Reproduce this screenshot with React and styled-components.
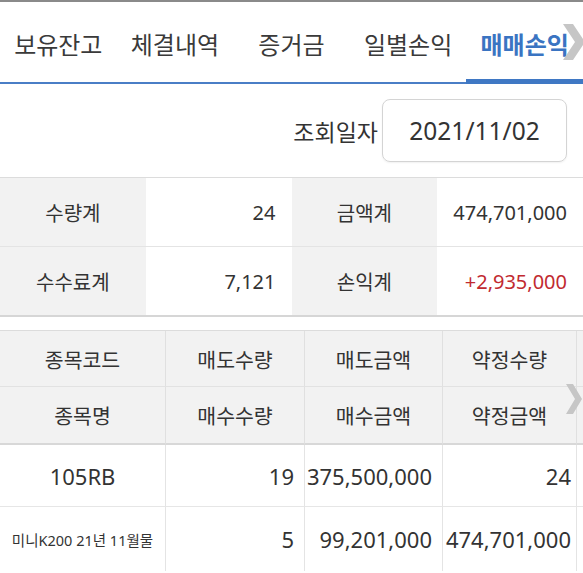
import React from "react";
import styled, { createGlobalStyle } from "styled-components";

const GlobalStyle = createGlobalStyle`
  html, body { margin: 0; padding: 0; background: #fff; }
  body {
    font-family: "Noto Sans", "Noto Sans CJK KR", sans-serif;
    color: #333;
    -webkit-font-smoothing: antialiased;
  }
`;

const Page = styled.div`
  width: 583px;
  height: 573px;
  overflow: hidden;
  position: relative;
  background: #fff;
`;

const TabBar = styled.nav`
  position: relative;
  display: flex;
  height: 80px;
  border-top: 2px solid #8a8a8a;
  border-bottom: 2px solid #4a7ec6;
`;

const Tab = styled.div`
  position: relative;
  flex: 1 1 0;
  display: flex;
  align-items: center;
  justify-content: center;
  font-size: 24px;
  white-space: nowrap;
  color: ${(p) => (p.$active ? "#3a74c2" : "#3a3a3a")};
  font-weight: ${(p) => (p.$active ? 700 : 400)};
  padding-top: 2px;
  box-sizing: border-box;

  &::after {
    content: "";
    display: ${(p) => (p.$active ? "block" : "none")};
    position: absolute;
    left: 0;
    right: 0;
    bottom: -2px;
    height: 5px;
    background: #3f78c4;
  }
`;

const Chevron = styled.svg`
  position: absolute;
  left: ${(p) => p.$left}px;
  top: ${(p) => p.$top}px;
  pointer-events: none;
`;

const DateRow = styled.div`
  height: 93px;
  display: flex;
  align-items: center;
  justify-content: flex-end;
  gap: 4px;
  padding-right: 16px;
`;

const DateLabel = styled.span`
  font-size: 23px;
  color: #333;
`;

const DateBox = styled.div`
  width: 185px;
  height: 63px;
  box-sizing: border-box;
  border: 1px solid #d4d4d4;
  border-radius: 8px;
  display: flex;
  align-items: center;
  justify-content: center;
  font-size: 24.5px;
  color: #333;
  box-shadow: 0 1px 2px rgba(0, 0, 0, 0.06);
`;

const Summary = styled.div`
  display: grid;
  grid-template-columns: repeat(4, 1fr);
  border-top: 1px solid #dcdcdc;
  border-bottom: 2px solid #d6d6d6;
`;

const SumCell = styled.div`
  height: 68px;
  display: flex;
  align-items: center;
  justify-content: ${(p) => (p.$label ? "center" : "flex-end")};
  padding: 0 16px;
  background: ${(p) => (p.$label ? "#f2f2f2" : "#fff")};
  border-bottom: ${(p) => (p.$last ? "none" : "1px solid #e4e4e4")};
  font-size: 20px;
  color: ${(p) => (p.$red ? "#c12a30" : "#333")};
  box-sizing: content-box;
`;

const Detail = styled.div`
  margin-top: 13px;
  display: grid;
  grid-template-columns: 166px 139px 138px 134px 1fr;
  border-top: 1px solid #dcdcdc;
`;

const HeadCell = styled.div`
  height: ${(p) => p.$h}px;
  display: flex;
  align-items: center;
  justify-content: center;
  background: #f2f2f2;
  font-size: 20.5px;
  color: #333;
  border-right: 1px solid #e0e0e0;
  border-bottom: ${(p) => (p.$bottom ? "2px solid #d8d8d8" : "1px solid #e2e2e2")};
  white-space: nowrap;
`;

const DataCell = styled.div`
  height: ${(p) => p.$h}px;
  display: flex;
  align-items: center;
  justify-content: ${(p) => (p.$center ? "center" : "flex-end")};
  padding: 0 ${(p) => (p.$center ? 0 : p.$pr ?? 10)}px;
  font-size: ${(p) => p.$fs ?? 22}px;
  color: #333;
  border-right: 1px solid #e4e4e4;
  border-bottom: ${(p) => (p.$bottom ? "1px solid #e6e6e6" : "none")};
  white-space: nowrap;
  background: #fff;
`;

const Spacer = styled.div`
  background: ${(p) => (p.$head ? "#f2f2f2" : "#fff")};
  border-bottom: ${(p) => p.$border || "none"};
`;

const tabs = ["보유잔고", "체결내역", "증거금", "일별손익", "매매손익"];

const ChevronIcon = ({ left, top, w, h, t }) => (
  <Chevron $left={left} $top={top} width={w} height={h} viewBox={`0 0 ${w} ${h}`}>
    <polygon
      points={`0,0 ${t},0 ${w},${h / 2} ${t},${h} 0,${h} ${w - t},${h / 2}`}
      fill="#c6c6c6"
    />
  </Chevron>
);

export default function App() {
  return (
    <Page>
      <GlobalStyle />
      <TabBar>
        {tabs.map((t, i) => (
          <Tab key={t} $active={i === 4}>
            {t}
          </Tab>
        ))}
      </TabBar>
      <ChevronIcon left={563} top={24} w={22} h={36} t={10} />

      <DateRow>
        <DateLabel>조회일자</DateLabel>
        <DateBox>2021/11/02</DateBox>
      </DateRow>

      <Summary>
        <SumCell $label>수량계</SumCell>
        <SumCell>24</SumCell>
        <SumCell $label>금액계</SumCell>
        <SumCell>474,701,000</SumCell>
        <SumCell $label $last>수수료계</SumCell>
        <SumCell $last>7,121</SumCell>
        <SumCell $label $last>손익계</SumCell>
        <SumCell $last $red>+2,935,000</SumCell>
      </Summary>

      <Detail>
        <HeadCell $h={55}>종목코드</HeadCell>
        <HeadCell $h={55}>매도수량</HeadCell>
        <HeadCell $h={55}>매도금액</HeadCell>
        <HeadCell $h={55}>약정수량</HeadCell>
        <Spacer $head $border="1px solid #e2e2e2" />

        <HeadCell $h={56} $bottom>종목명</HeadCell>
        <HeadCell $h={56} $bottom>매수수량</HeadCell>
        <HeadCell $h={56} $bottom>매수금액</HeadCell>
        <HeadCell $h={56} $bottom>약정금액</HeadCell>
        <Spacer $head $border="2px solid #d8d8d8" />

        <DataCell $h={61} $center $bottom>105RB</DataCell>
        <DataCell $h={61} $bottom>19</DataCell>
        <DataCell $h={61} $bottom>375,500,000</DataCell>
        <DataCell $h={61} $bottom $pr={5}>24</DataCell>
        <Spacer $border="1px solid #e6e6e6" />

        <DataCell $h={64} $center $fs={14.5}>미니K200 21년 11월물</DataCell>
        <DataCell $h={64}>5</DataCell>
        <DataCell $h={64}>99,201,000</DataCell>
        <DataCell $h={64} $pr={5}>474,701,000</DataCell>
        <Spacer />
      </Detail>
      <ChevronIcon left={566} top={384} w={16} h={30} t={7} />
    </Page>
  );
}
